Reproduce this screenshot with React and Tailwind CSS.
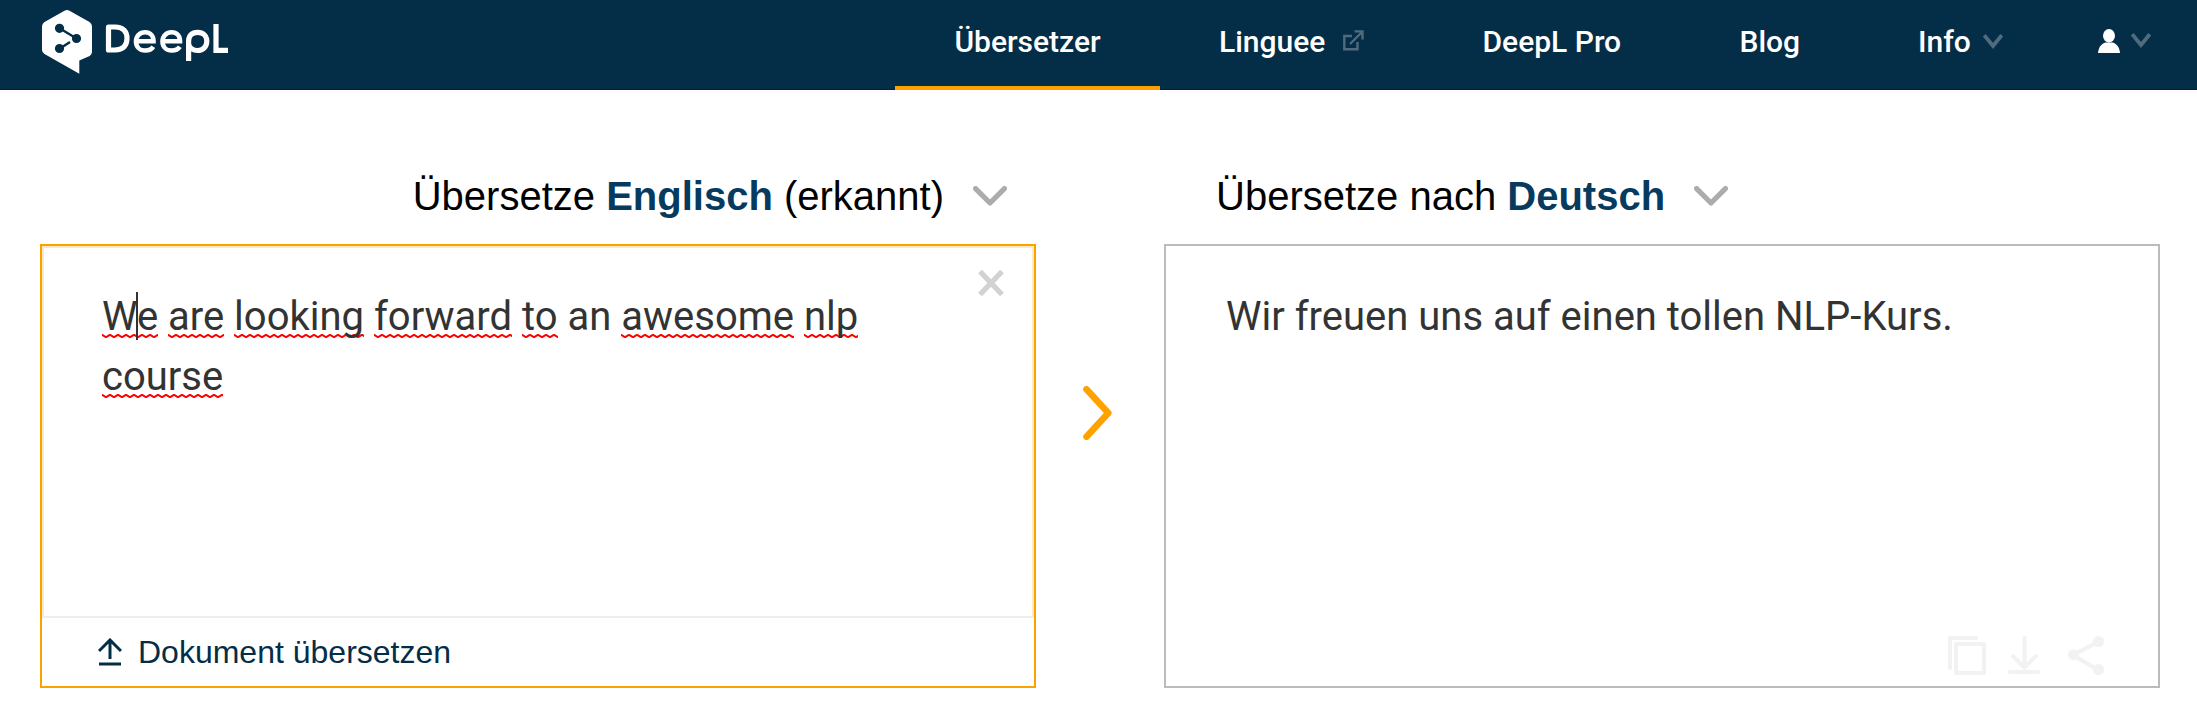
import React from 'react';

const NavChevron = () => (
  <svg className="h-[15px] w-5 shrink-0" viewBox="0 0 20 15" fill="none" stroke="#506b7d" strokeWidth="3.8">
    <path d="M1.2 1.2 10 12 18.8 1.2" />
  </svg>
);

const TitleChevron = () => (
  <svg className="h-5 w-[34px] shrink-0" viewBox="0 0 34 20" fill="none" stroke="#acacac" strokeWidth="5.2" strokeLinecap="round" strokeLinejoin="round">
    <path d="M2.6 2.6 17 17 31.4 2.6" />
  </svg>
);

const Logo = () => (
  <svg className="h-[64px] w-[190px]" viewBox="0 0 190 64">
    <path fill="#fff" d="M22.5.8Q25 -.6 27.500 .8L47.500 12Q50 13.500 50 16.500V42Q50 44.600 47.700 46L37.300 50.500V63.800L2.500 44Q0 42.600 0 40V16.500Q0 13.500 2.500 12Z" />
    <g stroke="#042d48" fill="#042d48" strokeWidth="2.4">
      <path d="M18 18.500 34.500 28.500M18 38.500 28 32" fill="none" />
      <circle cx="17.500" cy="18.300" r="3.400" />
      <circle cx="34.500" cy="28.500" r="3.400" />
      <circle cx="17.500" cy="38.500" r="3.400" />
    </g>
    <g fill="none" stroke="#fff" strokeWidth="5.200">
      <path strokeLinejoin="round" d="M66.500 17H73C81.500 17 85 22 85 28.500S81.500 40 73 40H66.500Z" />
      <path d="M94 31.300H111.500C111.500 25.300 108 22.300 103.200 22.300C97.800 22.300 94 26.200 94 31.400C94 36.800 97.800 40.500 103.200 40.500C107 40.500 109.800 39 111.300 36.700" strokeWidth="4.600" />
      <path d="M120.500 31.300H138C138 25.300 134.500 22.300 129.700 22.300C124.300 22.300 120.500 26.200 120.500 31.400C120.500 36.800 124.300 40.500 129.700 40.500C133.500 40.500 136.300 39 137.800 36.700" strokeWidth="4.600" />
      <path d="M146.600 51V31.300C146.600 25.500 150 22.300 155.600 22.300S164.800 26 164.800 31.300S161 40.500 155.600 40.500C151 40.500 147.500 38 146.600 34" />
      <path d="M174 14V40.300H186" />
    </g>
  </svg>
);

const wave = 'M0 1' + 'c1.600 0 2.400 2 4 2s2.400 -2 4 -2'.repeat(30);

const Misspelled = ({ caret, children }) => (
  <span className="relative">
    {children}
    {caret && <i className="absolute top-[-1px] left-[34px] h-12 w-[2px] bg-[#333]" />}
    <svg className="absolute top-[41px] left-0 -z-10 h-1 w-full overflow-hidden" fill="none" stroke="#ff0000" strokeWidth="2.100">
      <path d={wave} />
    </svg>
  </span>
);

function Header() {
  return (
    <header className="flex h-[90px] items-start border-b border-[#02203a] bg-[#042d48] pl-[42px] text-[30px] leading-[83px] font-medium text-white">
      <div className="w-[853px] pt-[10px]"><Logo /></div>
      <nav className="flex items-start">
        <a className="flex h-[90px] w-[265px] justify-center border-b-4 border-[#ff9f00]">Übersetzer</a>
        <a className="flex w-[264px] items-center pl-[59px]">
          <span className="w-[124px]">Linguee</span>
          <svg className="mb-[2px] h-[21px] w-[21px]" viewBox="0 0 21 21" fill="none" stroke="#506b7d" strokeWidth="2.400">
            <path d="M9 6H1.300V19.300H14.500V12M7 14 19 2M11.500 1.400H19.500V9.500" />
          </svg>
        </a>
        <a className="w-[257px] pl-[58.5px]">DeepL Pro</a>
        <a className="w-[176px] pl-[58.5px]">Blog</a>
        <a className="flex w-[241px] items-center pl-[61px]">
          <span className="w-[65px]">Info</span><NavChevron />
        </a>
        <a className="flex h-[81px] items-center gap-[11px]">
          <svg className="h-[24px] w-[22px]" viewBox="0 0 22 24" fill="#fff">
            <ellipse cx="11" cy="6.800" rx="6" ry="6.800" />
            <path d="M7.500 13.600H14.500C19 15 21.500 18.500 22 24H0C.5 18.500 3 15 7.500 13.600Z" />
          </svg>
          <NavChevron />
        </a>
      </nav>
    </header>
  );
}

export default function App() {
  return (
    <div className="h-[722px] w-[2197px] overflow-hidden bg-white font-[Roboto,sans-serif]">
      <Header />
      <main className="flex pl-10">
        <section className="w-[996px]">
          <div className="flex h-[154px] items-center justify-end gap-[29px] pt-[57px] pr-[29px] font-['Liberation_Sans',sans-serif] text-[40px] text-black">
            <h2 className="pt-[1px]">Übersetze <b className="text-[#063b5f]">Englisch</b> (erkannt)</h2>
            <TitleChevron />
          </div>
          <div className="flex h-[444px] flex-col border-2 border-[#faa200]">
            <div className="flex h-[370px] justify-between border-x-2 border-t-2 border-[#ffe9c0] pl-[58px] text-[40px] leading-[60px] text-[#333]">
              <p className="isolate pt-[39px]">
                <Misspelled caret>We</Misspelled> <Misspelled>are</Misspelled> <Misspelled>looking</Misspelled> <Misspelled>forward</Misspelled> <Misspelled>to</Misspelled> an <Misspelled>awesome</Misspelled> <Misspelled>nlp</Misspelled><br />
                <Misspelled>course</Misspelled>
              </p>
              <svg className="mt-[21px] mr-[28px] h-[28px] w-[26px] shrink-0" viewBox="0 0 26 28" stroke="#d0d2d4" strokeWidth="5.400">
                <path d="M2 2.500 24 25.500M24 2.500 2 25.500" />
              </svg>
            </div>
            <div className="flex flex-1 items-center gap-4 border-t-2 border-[#eee] pl-[56px] font-['Liberation_Sans',sans-serif] text-[32px] text-[#042d48]">
              <svg className="h-[28px] w-6" viewBox="0 0 24 28" fill="none" stroke="#042d48" strokeWidth="3">
                <path d="M12 21V2M1 13 12 2 23 13M1 26H23" />
              </svg>
              <span>Dokument übersetzen</span>
            </div>
          </div>
        </section>
        <div className="flex w-32 pt-[296px] pl-[47px]">
          <svg className="h-[54px] w-[29px]" viewBox="0 0 29 54" fill="none" stroke="#ffa200" strokeWidth="6.600" strokeLinecap="round" strokeLinejoin="round">
            <path d="M3.500 3.300 25.300 27 3.500 50.700" />
          </svg>
        </div>
        <section className="w-[996px]">
          <div className="flex h-[154px] items-center gap-[29px] pt-[57px] pl-[52px] font-['Liberation_Sans',sans-serif] text-[40px] text-black">
            <h2 className="pt-[1px]">Übersetze nach <b className="text-[#063b5f]">Deutsch</b></h2>
            <TitleChevron />
          </div>
          <div className="flex h-[444px] flex-col justify-between border-2 border-[#bbb] pl-[60px] text-[40px] leading-[60px] text-[#333]">
            <p className="pt-[41px]">Wir freuen uns auf einen tollen NLP-Kurs.</p>
            <div className="flex justify-end pr-[54px] pb-[11px]">
              <svg className="h-10 w-[157px]" viewBox="0 0 157 40" fill="none" stroke="#f2f2f2" strokeWidth="4" strokeLinecap="round" strokeLinejoin="round">
                <path d="M3 33V3H29M9 9H37V38H9Z" />
                <path d="M77.500 3V32M66 21 77.500 32.500 89 21M63 37H91" />
                <path d="M151 7 126 20 151 35" />
                <g fill="#f2f2f2" stroke="none"><circle cx="151.500" cy="6.500" r="5.500" /><circle cx="126.500" cy="19.700" r="5.500" /><circle cx="151.500" cy="34.500" r="5.500" /></g>
              </svg>
            </div>
          </div>
        </section>
      </main>
    </div>
  );
}
